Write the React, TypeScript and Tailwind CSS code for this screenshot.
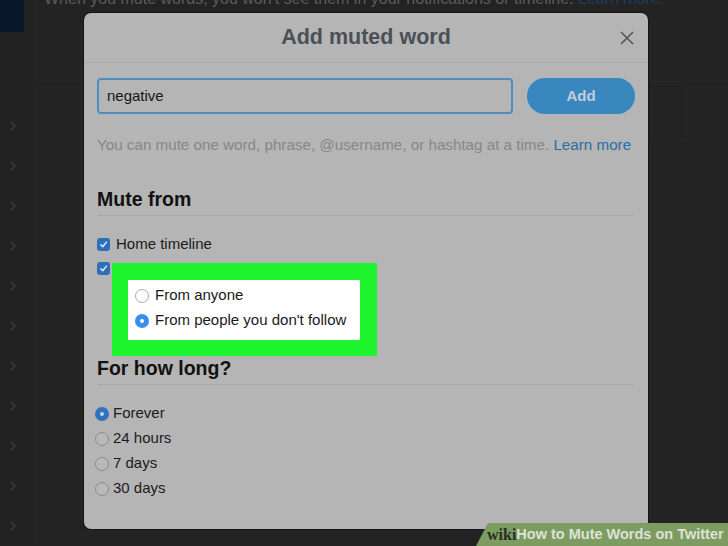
import React from "react";

const Check = () => (
  <span className="w-[13px] h-[13px] rounded-[3px] bg-[#2d6fb8] flex items-center justify-center shrink-0">
    <svg width="9" height="9" viewBox="0 0 10 10">
      <path d="M2 5.3 L4.2 7.4 L8.2 2.6" stroke="#dce6f0" strokeWidth="1.7" fill="none" strokeLinecap="round" strokeLinejoin="round" />
    </svg>
  </span>
);

const RadioOn = ({ bright }: { bright?: boolean }) => (
  <span
    className={
      "w-[14px] h-[14px] rounded-full flex items-center justify-center shrink-0 " +
      (bright ? "bg-[#3a8fee]" : "bg-[#2e72c0]")
    }
  >
    <span className={"w-[4px] h-[4px] rounded-full " + (bright ? "bg-white" : "bg-[#c9d4e0]")} />
  </span>
);

const RadioOff = ({ bright }: { bright?: boolean }) => (
  <span
    className={
      "w-[14px] h-[14px] rounded-full shrink-0 border " +
      (bright ? "bg-white border-[#a9a9a9]" : "bg-[#b9b9b9] border-[#8c8c8c]")
    }
  />
);

const Chevron = () => (
  <svg width="8" height="12" viewBox="0 0 8 12">
    <path d="M1.5 1.5 L6 6 L1.5 10.5" stroke="#3a3a3a" strokeWidth="1.5" fill="none" />
  </svg>
);

export default function App() {
  const rows = Array.from({ length: 11 });
  return (
    <div className="relative w-[728px] h-[546px] overflow-hidden bg-[#232323] font-['Liberation_Sans',Arial,sans-serif]">
      <div className="flex h-full">
        {/* sidebar */}
        <div className="w-[33px] shrink-0 flex flex-col bg-[#212121]">
          <div className="w-[24px] h-[34px] bg-[#08182a]" />
          <div className="h-[78px]" />
          {rows.map((_, i) => (
            <div key={i} className="h-[40px] shrink-0 flex items-center pl-[9px] border-b border-[#242424]">
              <Chevron />
            </div>
          ))}
        </div>
        {/* main */}
        <div className="flex-1 flex flex-col">
          <div className="h-[12px] overflow-hidden">
            <p className="-mt-[11px] ml-[11px] text-[16px] leading-[20px] text-[#5b5b5b] whitespace-nowrap">
              When you mute words, you won't see them in your notifications or timeline.{" "}
              <span className="text-[#1d3d62]">Learn more.</span>
            </p>
          </div>
          <div className="h-[70px] border-b border-[#282828]" />
          <div className="ml-[619px] w-[34px] h-[58px] border border-[#262626]" />
        </div>
      </div>

      {/* modal */}
      <div className="absolute left-[84px] top-[13px] w-[564px] h-[516px] rounded-[7px] bg-[#b5b5b5] shadow-[0_0_0_1px_#151515]">
        <div className="relative h-[50px] flex items-center justify-center border-b border-[#a6a8ab]">
          <span className="text-[21.5px] font-bold text-[#4a5057]">Add muted word</span>
          <svg className="absolute right-[14px] top-[18px]" width="14" height="14" viewBox="0 0 14 14">
            <path d="M1 1 L13 13 M13 1 L1 13" stroke="#525659" strokeWidth="1.6" />
          </svg>
        </div>
        <div className="px-[13px]">
          <div className="mt-[15px] flex gap-[14px]">
            <div className="w-[416px] h-[36px] rounded-[4px] border-2 border-[#4f8ec2] flex items-center pl-[8px] text-[15px] text-[#161616]">
              negative
            </div>
            <div className="w-[108px] h-[36px] rounded-full bg-[#3a86bf] flex items-center justify-center text-[15px] font-bold text-[#c3ced7]">
              Add
            </div>
          </div>
          <p className="mt-[21px] text-[15.2px] leading-[20px] text-[#878787] whitespace-nowrap">
            You can mute one word, phrase, @username, or hashtag at a time.{" "}
            <span className="text-[#2a6ea7]">Learn more</span>
          </p>
          <div className="mt-[32px] pb-[4px] border-b border-[#a6a8ab]">
            <h2 className="text-[19.5px] leading-[24px] font-bold text-[#111]">Mute from</h2>
          </div>
          <div className="mt-[18px] flex flex-col gap-[4px]">
            <div className="h-[20px] flex items-center gap-[6px] text-[15px] text-[#1b1b1b]">
              <Check />
              <span>Home timeline</span>
            </div>
            <div className="h-[20px] flex items-center gap-[6px] text-[15px] text-[#1b1b1b]">
              <Check />
            </div>
          </div>
          <div className="mt-[78px] pb-[4px] border-b border-[#a6a8ab]">
            <h2 className="text-[19.5px] leading-[24px] font-bold text-[#111]">For how long?</h2>
          </div>
          <div className="mt-[16px] flex flex-col -ml-[2px]">
            {[
              ["Forever", true],
              ["24 hours", false],
              ["7 days", false],
              ["30 days", false],
            ].map(([label, on]) => (
              <div key={label as string} className="h-[25px] flex items-center gap-[4px] text-[15px] text-[#1b1b1b]">
                {on ? <RadioOn /> : <RadioOff />}
                <span>{label as string}</span>
              </div>
            ))}
          </div>
        </div>

        {/* green highlight annotation */}
        <div className="absolute left-[28px] top-[250px] w-[265px] h-[93px] bg-[#1ef52e] pl-[16px] pt-[17px]">
          <div className="w-[232px] h-[60px] bg-white pt-[3px] pl-[7px] flex flex-col">
            <div className="h-[25px] flex items-center gap-[6px] text-[15px] text-[#1a1a1a]">
              <RadioOff bright />
              <span>From anyone</span>
            </div>
            <div className="h-[25px] flex items-center gap-[6px] text-[15px] text-[#1a1a1a]">
              <RadioOn bright />
              <span>From people you don't follow</span>
            </div>
          </div>
        </div>
      </div>

      {/* wikiHow watermark */}
      <div className="absolute left-[476px] top-[523px] w-[252px] h-[23px] bg-[#7d9c61] [clip-path:polygon(12px_0,100%_0,100%_100%,0_100%)] flex items-center pl-[11px] whitespace-nowrap">
        <span className="font-['Liberation_Serif',serif] font-bold text-[16px] text-[#2a2d26] leading-none">wiki</span>
        <span className="font-bold text-[14.5px] text-[#dce2d6] leading-none">How to Mute Words on Twitter</span>
      </div>
    </div>
  );
}
